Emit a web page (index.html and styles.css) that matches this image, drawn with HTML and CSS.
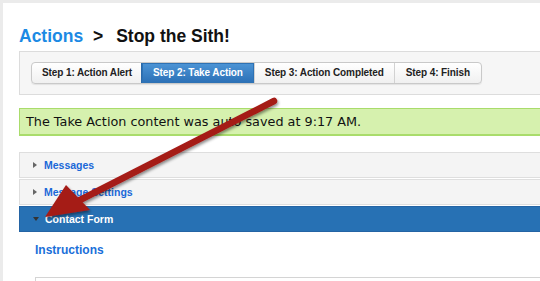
FILE: index.html
```html
<!DOCTYPE html>
<html lang="en">
<head>
    <meta charset="UTF-8">
    <title>Stop the Sith! - Actions</title>
    <link rel="stylesheet" href="styles.css">
</head>
<body>
    <div class="page">
        <h1><a class="crumb" href="#">Actions</a> <span class="sep">&gt;</span> Stop the Sith!</h1>

        <div class="steps">
            <div class="step-group">
                <a class="step" href="#">Step 1: Action Alert</a>
                <a class="step active" href="#">Step 2: Take Action</a>
                <a class="step" href="#">Step 3: Action Completed</a>
                <a class="step" href="#">Step 4: Finish</a>
            </div>
        </div>

        <div class="notice">The Take Action content was auto saved at 9:17 AM.</div>

        <div class="panels">
            <div class="panel"><span class="caret right"></span>Messages</div>
            <div class="panel"><span class="caret right"></span>Message Settings</div>
            <div class="panel open"><span class="caret down"></span>Contact Form</div>
        </div>

        <div class="section">
            <h2>Instructions</h2>
            <div class="field"></div>
        </div>
    </div>

    <svg class="arrow" width="540" height="281" viewBox="0 0 540 281">
        <defs>
            <filter id="shadow" x="-20%" y="-20%" width="140%" height="140%">
                <feDropShadow dx="1" dy="2" stdDeviation="1.5" flood-color="#000" flood-opacity="0.45"/>
            </filter>
        </defs>
        <g filter="url(#shadow)">
            <line x1="274" y1="101" x2="80" y2="200" stroke="#a51a16" stroke-width="6.5" stroke-linecap="round"/>
            <polygon points="45,217 66,185 90,210" fill="#a51a16"/>
        </g>
    </svg>
</body>
</html>
```

FILE: styles.css
```css
body {
    margin: 0;
    background: #ebebeb;
    font-family: 'Liberation Sans', Arial, sans-serif;
    overflow: hidden;
    height: 281px;
}
.page {
    margin: 3px 0 0 3px;
    padding: 23px 0 0 16px;
    background: #fff;
    height: 300px;
    width: 700px;
}
h1 {
    margin: 0 0 4px;
    font-size: 17.5px;
    line-height: 21px;
    font-weight: bold;
    color: #111;
}
.crumb {
    color: #1c8ae4;
    text-decoration: none;
}
.sep {
    margin: 0 8px 0 5px;
}
.steps {
    background: #f6f6f6;
    border: 1px solid #dcdcdc;
    padding: 10px 11px;
}
.step-group {
    display: inline-flex;
    border: 1px solid #c9c9c9;
    border-radius: 4px;
    background: linear-gradient(#ffffff, #f0f0f0);
    box-shadow: 0 1px 1px rgba(0, 0, 0, 0.08);
}
.step {
    display: block;
    height: 20px;
    line-height: 20px;
    padding: 0 10px;
    font-size: 10px;
    letter-spacing: -0.1px;
    font-weight: bold;
    color: #222;
    text-decoration: none;
    border-left: 1px solid #d2d2d2;
}
.step:first-child {
    padding: 0 9px 0 10px;
    border-left: none;
}
.step:last-child {
    padding: 0 11px;
}
.step.active {
    padding: 0 11px;
    background: linear-gradient(#4d95d6, #2b70b6);
    color: #fff;
    border-left-color: #2a6aab;
    box-shadow: inset 0 0 0 1px #2e72b4;
}
.notice {
    margin-top: 13px;
    background: #d6f1ae;
    border: 2px solid #a9dc6b;
    border-width: 1px 1px 2px;
    padding: 0 6px;
    height: 25px;
    line-height: 25px;
    font-family: 'DejaVu Sans', Verdana, sans-serif;
    font-size: 12.8px;
    color: #111;
}
.panels {
    margin-top: 16px;
}
.panel {
    display: flex;
    align-items: center;
    height: 24px;
    margin-bottom: 1px;
    padding-left: 13px;
    background: #f4f4f4;
    border: 1px solid #dedede;
    font-size: 10.5px;
    font-weight: bold;
    color: #1a68d8;
}
.panel.open {
    background: #2771b4;
    border-color: #2464a4;
    color: #fff;
}
.caret {
    width: 0;
    height: 0;
    margin-right: 7px;
}
.caret.right {
    border-top: 3px solid transparent;
    border-bottom: 3px solid transparent;
    border-left: 4px solid #666;
}
.caret.down {
    margin-right: 6px;
    border-left: 3px solid transparent;
    border-right: 3px solid transparent;
    border-top: 4px solid #333;
}
.section {
    padding: 8px 0 0 16px;
}
h2 {
    margin: 0;
    font-size: 12px;
    line-height: 18px;
    font-weight: bold;
    color: #1a6fd9;
}
.field {
    margin-top: 18px;
    height: 30px;
    border: 1px solid #d4d4d4;
    background: #fff;
}
.arrow {
    position: absolute;
    top: 0;
    left: 0;
}
```
